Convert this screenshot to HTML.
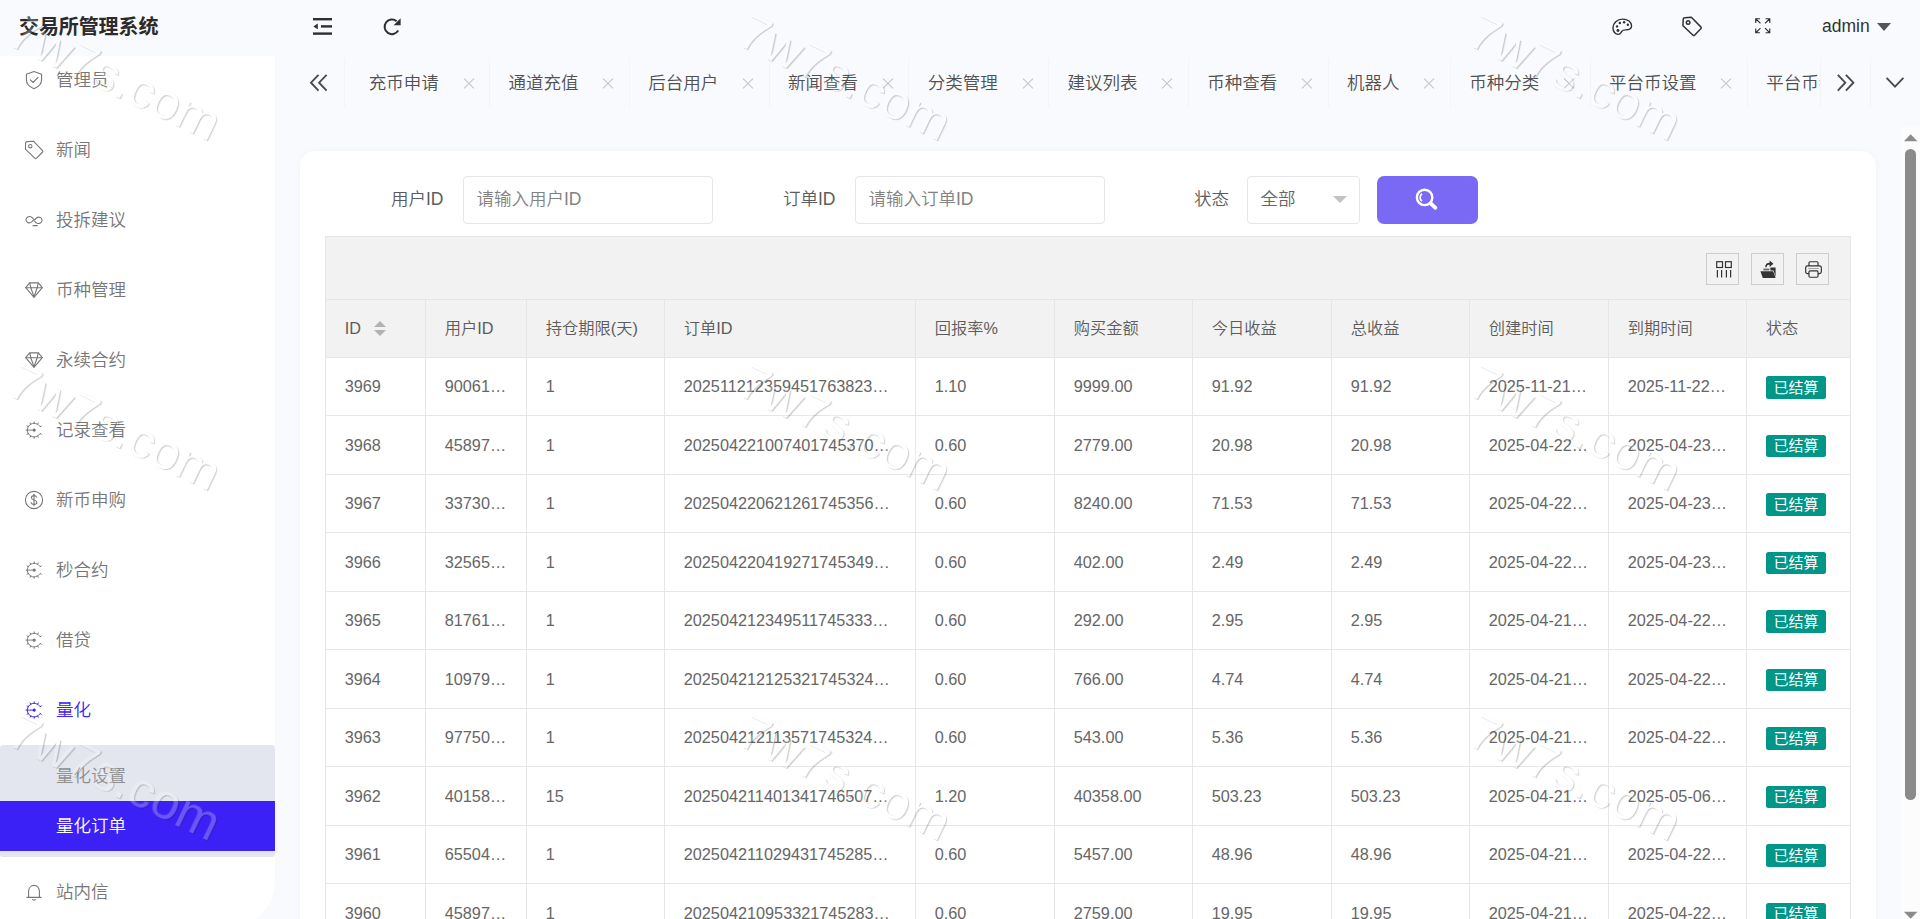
<!DOCTYPE html>
<html lang="zh-CN">
<head>
<meta charset="utf-8">
<title>交易所管理系统</title>
<style>
*{box-sizing:border-box;margin:0;padding:0}
html,body{width:1920px;height:919px;overflow:hidden}
body{background:#f9fafe;font-family:"Liberation Sans","Noto Sans CJK SC",sans-serif;font-size:17.5px;color:#666;position:relative;font-weight:350}
svg{display:block;overflow:visible}
.abs{position:absolute}
/* header */
#logo{position:absolute;left:19px;top:0;height:52px;line-height:54px;font-size:20px;font-weight:700;color:#2b2b2b;white-space:nowrap;letter-spacing:-0.1px}
.hicon{position:absolute;color:#2f2f2f}
#admin{position:absolute;left:1822px;top:12px;height:28px;line-height:28px;font-size:17.5px;color:#333}
#caret{position:absolute;left:1877px;top:22.5px;width:0;height:0;border-left:7px solid transparent;border-right:7px solid transparent;border-top:8px solid #555}
/* sidebar */
#side{position:absolute;left:0;top:56px;width:275px;height:871px;background:#fff;border-bottom-right-radius:45px;overflow:hidden}
.mi{position:absolute;left:0;width:275px;height:70px;line-height:71.5px;color:#777;font-size:17.5px;white-space:nowrap}
.mi svg{position:absolute;left:24px;top:25px;width:20px;height:20px}
.mi span{position:absolute;left:56px;top:0}
.mi.on{color:#3b21f5}
#sub{position:absolute;left:0;top:689px;width:275px;height:112px;background:#e4e6ef;border-radius:3px 3px 3px 3px}
#sub .s1{position:absolute;left:56px;top:6px;height:50px;line-height:51.5px;color:#8e8e8e}
#sub .s2{position:absolute;left:0;top:56px;width:275px;height:50px;line-height:51.5px;background:#3b21f5;color:#fff;padding-left:56px}
/* tabs */
#tabs{position:absolute;left:300px;top:56px;width:1620px;height:52px}
.tsep{position:absolute;top:2px;width:1px;height:49px;background:#f3f3f8}
.tab{position:absolute;top:0;height:52px;line-height:55px;color:#505050;font-size:17.5px;white-space:nowrap;overflow:hidden}
.tx{position:absolute;top:22px;width:10px;height:10px}
.tx:before,.tx:after{content:"";position:absolute;left:-2px;top:4.5px;width:14px;height:1px;background:#c4c4c4;transform:rotate(45deg)}
.tx:after{transform:rotate(-45deg)}
/* card */
#card{position:absolute;left:300px;top:151px;width:1576px;height:800px;background:#fff;border-radius:15px;box-shadow:0 0 6px rgba(120,120,160,.05)}
.lbl{position:absolute;top:176px;height:47.5px;line-height:47.5px;color:#5c5c5c;white-space:nowrap}
.inp{position:absolute;top:176px;height:47.5px;line-height:45.5px;border:1px solid #e6e6e6;border-radius:4px;background:#fff;color:#828282;padding-left:12.5px;white-space:nowrap}
#btn{position:absolute;left:1377px;top:176px;width:101px;height:47.5px;background:#7a69f5;border-radius:7px}
/* table */
#tb{position:absolute;left:325px;top:236px;width:1526px;height:700px;border:1px solid #e6e6e6;border-bottom:0;background:#fff}
#tool{position:absolute;left:0;top:0;width:1524px;height:63px;background:#f2f2f2;border-bottom:1px solid #e6e6e6}
.tbtn{position:absolute;top:16px;width:33px;height:32px;border:1px solid #ccc}
#th{position:absolute;left:0;top:63px;width:1524px;height:58px;line-height:56px;background:#f2f2f2;border-bottom:1px solid #e6e6e6}
.row{position:absolute;left:0;width:1524px;height:58.5px;border-bottom:1px solid #e6e6e6}
.c{position:absolute;top:0;height:100%;line-height:inherit;font-size:16.25px;padding-left:18.75px;white-space:nowrap;color:#666;border-right:1px solid #e6e6e6;overflow:hidden}
.bd{position:absolute;left:19px;top:18.5px;width:60px;height:22.5px;line-height:22.5px;background:#009688;border-radius:2.5px;color:#fff;font-size:15px;text-align:center;font-weight:400}
#th .c{color:#5c5c5c}
/* scrollbar */
#sb{position:absolute;left:1901px;top:126px;width:19px;height:793px;background:#fcfcfc}
#sbt{position:absolute;left:4px;top:22.5px;width:11px;height:651px;border-radius:5.5px;background:#8b8b8b}
</style>
</head>
<body>
<div id="logo">交易所管理系统</div>
<div id="side">
<div class="mi" style="top:-11px"><svg width="20" height="20" viewBox="0 0 20 20" style="" fill="none" stroke="currentColor" stroke-width="1.1" stroke-linecap="round" stroke-linejoin="round"><path d="M10 1.6 L17.6 4.2 V9.6 C17.6 14 14.2 17.2 10 18.8 C5.8 17.2 2.4 14 2.4 9.6 V4.2 Z"/><path d="M6.3 9.8 L9.1 12.5 L14 7.3"/></svg><span>管理员</span></div>
<div class="mi" style="top:59px"><svg width="20" height="20" viewBox="0 0 20 20" style="" fill="none" stroke="currentColor" stroke-width="1.1" stroke-linecap="round" stroke-linejoin="round"><path d="M1.6 3.2 Q1.6 1.6 3.2 1.6 L9.4 1.2 L18.6 10.6 Q19.2 11.3 18.6 12 L12.4 18.3 Q11.7 18.9 11 18.3 L1.4 9.2 Z"/><circle cx="6.3" cy="6.2" r="1.7"/></svg><span>新闻</span></div>
<div class="mi" style="top:129px"><svg width="20" height="20" viewBox="0 0 20 20" style="" fill="none" stroke="currentColor" stroke-width="1.1" stroke-linecap="round" stroke-linejoin="round"><path d="M9.4 9.0 C8.2 6.6 5.6 5.9 3.6 7.0 C1.4 8.3 1.4 11.3 3.6 12.4 C5.4 13.3 7.4 12.6 8.6 11.0"/><path d="M10.6 11.0 C11.8 13.4 14.4 14.1 16.4 13.0 C18.6 11.7 18.6 8.7 16.4 7.6 C14.6 6.7 12.6 7.4 11.4 9.0"/><path d="M8.6 11.0 L11.4 9.0"/><path d="M9 15.6 H13.4"/></svg><span>投拆建议</span></div>
<div class="mi" style="top:199px"><svg width="20" height="20" viewBox="0 0 20 20" style="" fill="none" stroke="currentColor" stroke-width="1.1" stroke-linecap="round" stroke-linejoin="round"><path d="M5.6 2.9 H14.4 L18.3 7.7 L10 17.4 L1.7 7.7 Z"/><path d="M1.9 7.7 H18.1"/><path d="M6.8 7.7 L10 16.8 L13.2 7.7"/><path d="M5.8 3.1 L6.8 7.7 M14.2 3.1 L13.2 7.7"/></svg><span>币种管理</span></div>
<div class="mi" style="top:269px"><svg width="20" height="20" viewBox="0 0 20 20" style="" fill="none" stroke="currentColor" stroke-width="1.1" stroke-linecap="round" stroke-linejoin="round"><path d="M5.6 2.9 H14.4 L18.3 7.7 L10 17.4 L1.7 7.7 Z"/><path d="M1.9 7.7 H18.1"/><path d="M6.8 7.7 L10 16.8 L13.2 7.7"/><path d="M5.8 3.1 L6.8 7.7 M14.2 3.1 L13.2 7.7"/></svg><span>永续合约</span></div>
<div class="mi" style="top:339px"><svg width="20" height="20" viewBox="0 0 20 20" style="" fill="none" stroke="currentColor" stroke-width="0.95" stroke-linecap="round" stroke-linejoin="round"><path d="M15.99 13.86 A6.9 6.9 0 1 1 15.99 6.34"/><path d="M16.18 13.55 L17.30 14.20" stroke-width="1"/><path d="M13.65 16.08 L14.30 17.20" stroke-width="1"/><path d="M10.20 17.00 L10.20 18.30" stroke-width="1"/><path d="M6.75 16.08 L6.10 17.20" stroke-width="1"/><path d="M4.22 13.55 L3.10 14.20" stroke-width="1"/><path d="M3.30 10.10 L2.00 10.10" stroke-width="1"/><path d="M4.22 6.65 L3.10 6.00" stroke-width="1"/><path d="M6.75 4.12 L6.10 3.00" stroke-width="1"/><path d="M10.20 3.20 L10.20 1.90" stroke-width="1"/><path d="M13.65 4.12 L14.30 3.00" stroke-width="1"/><path d="M16.18 6.65 L17.30 6.00" stroke-width="1"/><path d="M4.4 10.1 H10"/><circle cx="10.2" cy="10.1" r="1.6" fill="currentColor" stroke="none"/></svg><span>记录查看</span></div>
<div class="mi" style="top:409px"><svg width="20" height="20" viewBox="0 0 20 20" style="" fill="none" stroke="currentColor" stroke-width="1.1" stroke-linecap="round" stroke-linejoin="round"><circle cx="10" cy="10" r="8.6"/><path d="M12.6 7.2 C12.2 6 11 5.6 10 5.6 C8.6 5.6 7.4 6.4 7.4 7.7 C7.4 10.6 12.8 9.2 12.8 12.3 C12.8 13.6 11.5 14.4 10 14.4 C8.7 14.4 7.5 13.9 7.1 12.6"/><path d="M10 4.2 V15.8"/></svg><span>新币申购</span></div>
<div class="mi" style="top:479px"><svg width="20" height="20" viewBox="0 0 20 20" style="" fill="none" stroke="currentColor" stroke-width="0.95" stroke-linecap="round" stroke-linejoin="round"><path d="M15.99 13.86 A6.9 6.9 0 1 1 15.99 6.34"/><path d="M16.18 13.55 L17.30 14.20" stroke-width="1"/><path d="M13.65 16.08 L14.30 17.20" stroke-width="1"/><path d="M10.20 17.00 L10.20 18.30" stroke-width="1"/><path d="M6.75 16.08 L6.10 17.20" stroke-width="1"/><path d="M4.22 13.55 L3.10 14.20" stroke-width="1"/><path d="M3.30 10.10 L2.00 10.10" stroke-width="1"/><path d="M4.22 6.65 L3.10 6.00" stroke-width="1"/><path d="M6.75 4.12 L6.10 3.00" stroke-width="1"/><path d="M10.20 3.20 L10.20 1.90" stroke-width="1"/><path d="M13.65 4.12 L14.30 3.00" stroke-width="1"/><path d="M16.18 6.65 L17.30 6.00" stroke-width="1"/><path d="M4.4 10.1 H10"/><circle cx="10.2" cy="10.1" r="1.6" fill="currentColor" stroke="none"/></svg><span>秒合约</span></div>
<div class="mi" style="top:549px"><svg width="20" height="20" viewBox="0 0 20 20" style="" fill="none" stroke="currentColor" stroke-width="0.95" stroke-linecap="round" stroke-linejoin="round"><path d="M15.99 13.86 A6.9 6.9 0 1 1 15.99 6.34"/><path d="M16.18 13.55 L17.30 14.20" stroke-width="1"/><path d="M13.65 16.08 L14.30 17.20" stroke-width="1"/><path d="M10.20 17.00 L10.20 18.30" stroke-width="1"/><path d="M6.75 16.08 L6.10 17.20" stroke-width="1"/><path d="M4.22 13.55 L3.10 14.20" stroke-width="1"/><path d="M3.30 10.10 L2.00 10.10" stroke-width="1"/><path d="M4.22 6.65 L3.10 6.00" stroke-width="1"/><path d="M6.75 4.12 L6.10 3.00" stroke-width="1"/><path d="M10.20 3.20 L10.20 1.90" stroke-width="1"/><path d="M13.65 4.12 L14.30 3.00" stroke-width="1"/><path d="M16.18 6.65 L17.30 6.00" stroke-width="1"/><path d="M4.4 10.1 H10"/><circle cx="10.2" cy="10.1" r="1.6" fill="currentColor" stroke="none"/></svg><span>借贷</span></div>
<div class="mi on" style="top:619px"><svg width="20" height="20" viewBox="0 0 20 20" style="" fill="none" stroke="currentColor" stroke-width="0.95" stroke-linecap="round" stroke-linejoin="round"><path d="M15.99 13.86 A6.9 6.9 0 1 1 15.99 6.34"/><path d="M16.18 13.55 L17.30 14.20" stroke-width="1"/><path d="M13.65 16.08 L14.30 17.20" stroke-width="1"/><path d="M10.20 17.00 L10.20 18.30" stroke-width="1"/><path d="M6.75 16.08 L6.10 17.20" stroke-width="1"/><path d="M4.22 13.55 L3.10 14.20" stroke-width="1"/><path d="M3.30 10.10 L2.00 10.10" stroke-width="1"/><path d="M4.22 6.65 L3.10 6.00" stroke-width="1"/><path d="M6.75 4.12 L6.10 3.00" stroke-width="1"/><path d="M10.20 3.20 L10.20 1.90" stroke-width="1"/><path d="M13.65 4.12 L14.30 3.00" stroke-width="1"/><path d="M16.18 6.65 L17.30 6.00" stroke-width="1"/><path d="M4.4 10.1 H10"/><circle cx="10.2" cy="10.1" r="1.6" fill="currentColor" stroke="none"/></svg><span>量化</span></div>
<div id="sub"><div class="s1">量化设置</div><div class="s2">量化订单</div></div>
<div class="mi" style="top:801px"><svg width="20" height="20" viewBox="0 0 20 20" style="" fill="none" stroke="currentColor" stroke-width="1.1" stroke-linecap="round" stroke-linejoin="round"><path d="M3 15.4 H17"/><path d="M4.6 15.2 V9.4 C4.6 5.8 7 3.4 10 3.4 C13 3.4 15.4 5.8 15.4 9.4 V15.2"/><path d="M8.6 17.6 Q10 18.6 11.4 17.6"/></svg><span>站内信</span></div>
</div>
<div id="tabs"><svg class="abs" style="left:10px;top:18px" width="18" height="18" viewBox="0 0 18 18" fill="none" stroke="#4a4a4a" stroke-width="1.9"><path d="M8.5 0.8 L1 8.7 L8.5 16.6"/><path d="M16.6 0.8 L9.1 8.7 L16.6 16.6"/></svg><div class="tsep" style="left:43.5px"></div><div class="tab" style="left:68.75px;width:110.00px">充币申请</div><div class="tx" style="left:163.50px"></div><div class="tsep" style="left:189.00px"></div><div class="tab" style="left:208.50px;width:110.00px">通道充值</div><div class="tx" style="left:303.25px"></div><div class="tsep" style="left:328.75px"></div><div class="tab" style="left:348.25px;width:110.00px">后台用户</div><div class="tx" style="left:443.00px"></div><div class="tsep" style="left:468.50px"></div><div class="tab" style="left:488.00px;width:110.00px">新闻查看</div><div class="tx" style="left:582.75px"></div><div class="tsep" style="left:608.25px"></div><div class="tab" style="left:627.75px;width:110.00px">分类管理</div><div class="tx" style="left:722.50px"></div><div class="tsep" style="left:748.00px"></div><div class="tab" style="left:767.50px;width:110.00px">建议列表</div><div class="tx" style="left:862.25px"></div><div class="tsep" style="left:887.75px"></div><div class="tab" style="left:907.25px;width:110.00px">币种查看</div><div class="tx" style="left:1002.00px"></div><div class="tsep" style="left:1027.50px"></div><div class="tab" style="left:1047.00px;width:92.50px">机器人</div><div class="tx" style="left:1124.25px"></div><div class="tsep" style="left:1149.75px"></div><div class="tab" style="left:1169.25px;width:110.00px">币种分类</div><div class="tx" style="left:1264.00px"></div><div class="tsep" style="left:1289.50px"></div><div class="tab" style="left:1309.00px;width:127.50px">平台币设置</div><div class="tx" style="left:1421.25px"></div><div class="tsep" style="left:1446.75px"></div><div class="tab" style="left:1466.25px;width:54.25px">平台币参数</div><div class="abs" style="left:1520.5px;top:0;width:100px;height:52px;background:#f9fafe"></div><div class="tsep" style="left:1520px"></div><div class="tsep" style="left:1570px"></div><svg class="abs" style="left:1537px;top:18px" width="18" height="18" viewBox="0 0 18 18" fill="none" stroke="#4a4a4a" stroke-width="1.9"><path d="M0.8 0.8 L8.3 8.7 L0.8 16.6"/><path d="M8.9 0.8 L16.4 8.7 L8.9 16.6"/></svg><svg class="abs" style="left:1586px;top:21px" width="18" height="11" viewBox="0 0 18 11" fill="none" stroke="#4a4a4a" stroke-width="1.9"><path d="M0.6 0.8 L9 9.6 L17.4 0.8"/></svg></div>
<svg class="hicon" style="left:313px;top:18px" width="19" height="17" viewBox="0 0 19 17" fill="#2f2f2f"><rect x="0" y="0" width="19" height="2.4"/><rect x="8" y="7.2" width="11" height="2.4"/><rect x="0" y="14.4" width="19" height="2.4"/><path d="M0.3 8.4 L4.8 5.6 V11.2 Z"/></svg><svg class="hicon" style="left:383px;top:17px" width="19" height="19" viewBox="0 0 19 19" fill="none" stroke="#2f2f2f" stroke-width="2"><path d="M15.2 13.6 A7.3 7.3 0 1 1 13.6 4.2"/><path d="M17.6 1.2 V8.2 H10.6 Z" fill="#2f2f2f" stroke="none"/></svg><svg class="hicon" style="left:1612px;top:17.5px" width="20.5" height="17.7" viewBox="0 0 22 19" fill="none" stroke="#2f2f2f" stroke-width="1.5"><path d="M11.4 1.2 C5.6 1.2 1 5.6 1 10.6 C1 14.6 3.6 17.6 6.6 17.6 C9 17.6 9.4 15.8 10.4 14.4 C11.4 13 13 12.8 15 12.8 C18.6 12.8 21 11 21 8.4 C21 4.2 16.8 1.2 11.4 1.2 Z"/><circle cx="5.4" cy="9" r="1.3" fill="#2f2f2f" stroke="none"/><circle cx="8.4" cy="5.4" r="1.3" fill="#2f2f2f" stroke="none"/><circle cx="13" cy="4.6" r="1.3" fill="#2f2f2f" stroke="none"/><circle cx="17" cy="7.2" r="1.3" fill="#2f2f2f" stroke="none"/><circle cx="6.4" cy="13.4" r="1.6" fill="#2f2f2f" stroke="none"/></svg><svg class="hicon" style="left:1681px;top:16px" width="22" height="21" viewBox="0 0 20 20" fill="none" stroke="#2f2f2f" stroke-width="1.4" stroke-linejoin="round"><path d="M1.6 3.2 Q1.6 1.6 3.2 1.6 L9.4 1.2 L18.6 10.6 Q19.2 11.3 18.6 12 L12.4 18.3 Q11.7 18.9 11 18.3 L1.4 9.2 Z"/><circle cx="6.3" cy="6.2" r="1.7"/></svg><svg class="hicon" style="left:1754.5px;top:18px" width="15.5" height="15.5" viewBox="0 0 17 17" fill="none" stroke="#2f2f2f" stroke-width="1.25"><path d="M0.8 5.4 V0.8 H5.4 M0.8 0.8 L6 6"/><path d="M11.6 0.8 H16.2 V5.4 M16.2 0.8 L11 6"/><path d="M0.8 11.6 V16.2 H5.4 M0.8 16.2 L6 11"/><path d="M11.6 16.2 H16.2 V11.6 M16.2 16.2 L11 11"/></svg><div id="admin">admin</div><div id="caret"></div>
<div id="card"></div>
<div class="lbl" style="left:391px">用户ID</div><div class="inp" style="left:463px;width:250px">请输入用户ID</div><div class="lbl" style="left:783px">订单ID</div><div class="inp" style="left:855px;width:250px">请输入订单ID</div><div class="lbl" style="left:1194px">状态</div><div class="inp" style="left:1247px;width:112.5px;color:#666">全部</div><div class="abs" style="left:1333px;top:196px;width:0;height:0;border-left:7px solid transparent;border-right:7px solid transparent;border-top:7.5px solid #c2c2c2"></div><div id="btn"><svg class="abs" style="left:37px;top:11px" width="24" height="24" viewBox="0 0 24 24" fill="none" stroke="#fff" stroke-width="2.4" stroke-linecap="round"><circle cx="10.6" cy="10.4" r="7.7"/><path d="M16.9 16.6 L21.4 20.8" stroke-width="3.8"/><path d="M8.02 14.09 A4.5 4.5 0 0 1 8.02 6.71" stroke-width="1.7" stroke-linecap="butt"/></svg></div>
<div id="tb"><div id="tool"><div class="tbtn" style="left:1380px"><svg class="abs" style="left:9px;top:7px" width="16" height="17" viewBox="0 0 16 17" fill="none" stroke="#333" stroke-width="1.2"><rect x="0.7" y="0.7" width="5.8" height="5.8"/><rect x="9.5" y="0.7" width="5.8" height="5.8"/><path d="M1.4 9 V16.4 M5.6 9 V16.4 M10.4 9 V16.4 M14.6 9 V16.4"/></svg></div><div class="tbtn" style="left:1425px"><svg class="abs" style="left:8px;top:6px" width="17" height="19" viewBox="0 0 17 19" fill="#333" stroke="none"><path d="M0.4 11.2 H13.2 L15.6 18 H2.8 Z"/><path d="M10.4 7.4 H15.6 V17 L13.6 10.4 H10.4 Z"/><path d="M3.4 10.4 V8.6 H9.4 V10.4 Z" fill="#666"/><path d="M5.2 7.2 C5.2 4.2 7 2.8 9.6 2.8 V0.6 L13.4 3.8 L9.6 7 V4.8 C8 4.8 6.6 5.4 6.6 7.2 Z"/></svg></div><div class="tbtn" style="left:1470px"><svg class="abs" style="left:7.5px;top:7px" width="17" height="17" viewBox="0 0 18 18" fill="none" stroke="#333" stroke-width="1.25"><path d="M4.2 5.2 V2 Q4.2 0.8 5.4 0.8 H12.6 Q13.8 0.8 13.8 2 V5.2"/><rect x="0.7" y="5.2" width="16.6" height="8.2" rx="2"/><rect x="4.2" y="10.4" width="9.6" height="6.8" rx="1.2" fill="#f2f2f2"/><path d="M3.4 8 H14.6" stroke-width="0.8" stroke="#888"/></svg></div></div><div id="th"><div class="c" style="left:0.0px;width:100.0px">ID</div><div class="c" style="left:100.0px;width:101.0px">用户ID</div><div class="c" style="left:201.0px;width:138.0px">持仓期限(天)</div><div class="c" style="left:339.0px;width:251.0px">订单ID</div><div class="c" style="left:590.0px;width:139.0px">回报率%</div><div class="c" style="left:729.0px;width:138.0px">购买金额</div><div class="c" style="left:867.0px;width:139.0px">今日收益</div><div class="c" style="left:1006.0px;width:138.0px">总收益</div><div class="c" style="left:1144.0px;width:139.0px">创建时间</div><div class="c" style="left:1283.0px;width:138.0px">到期时间</div><div class="c" style="left:1421.0px;width:104.0px;border-right:0">状态</div><div class="abs" style="left:48px;top:21px;width:0;height:0;border-left:6px solid transparent;border-right:6px solid transparent;border-bottom:6px solid #b2b2b2"></div><div class="abs" style="left:48px;top:30px;width:0;height:0;border-left:6px solid transparent;border-right:6px solid transparent;border-top:6px solid #b2b2b2"></div></div>
<div class="row" style="top:121px;height:58px;line-height:56px"><div class="c" style="left:0.0px;width:100.0px">3969</div><div class="c" style="left:100.0px;width:101.0px">90061…</div><div class="c" style="left:201.0px;width:138.0px">1</div><div class="c" style="left:339.0px;width:251.0px">202511212359451763823…</div><div class="c" style="left:590.0px;width:139.0px">1.10</div><div class="c" style="left:729.0px;width:138.0px">9999.00</div><div class="c" style="left:867.0px;width:139.0px">91.92</div><div class="c" style="left:1006.0px;width:138.0px">91.92</div><div class="c" style="left:1144.0px;width:139.0px">2025-11-21…</div><div class="c" style="left:1283.0px;width:138.0px">2025-11-22…</div><div class="c" style="left:1421.0px;width:104.0px;border-right:0"><span class="bd" style="top:18px;height:23px;line-height:23px">已结算</span></div></div>
<div class="row" style="top:179px;height:59px;line-height:59px"><div class="c" style="left:0.0px;width:100.0px">3968</div><div class="c" style="left:100.0px;width:101.0px">45897…</div><div class="c" style="left:201.0px;width:138.0px">1</div><div class="c" style="left:339.0px;width:251.0px">202504221007401745370…</div><div class="c" style="left:590.0px;width:139.0px">0.60</div><div class="c" style="left:729.0px;width:138.0px">2779.00</div><div class="c" style="left:867.0px;width:139.0px">20.98</div><div class="c" style="left:1006.0px;width:138.0px">20.98</div><div class="c" style="left:1144.0px;width:139.0px">2025-04-22…</div><div class="c" style="left:1283.0px;width:138.0px">2025-04-23…</div><div class="c" style="left:1421.0px;width:104.0px;border-right:0"><span class="bd" style="top:19px;height:22px;line-height:22px">已结算</span></div></div>
<div class="row" style="top:238px;height:58px;line-height:56px"><div class="c" style="left:0.0px;width:100.0px">3967</div><div class="c" style="left:100.0px;width:101.0px">33730…</div><div class="c" style="left:201.0px;width:138.0px">1</div><div class="c" style="left:339.0px;width:251.0px">202504220621261745356…</div><div class="c" style="left:590.0px;width:139.0px">0.60</div><div class="c" style="left:729.0px;width:138.0px">8240.00</div><div class="c" style="left:867.0px;width:139.0px">71.53</div><div class="c" style="left:1006.0px;width:138.0px">71.53</div><div class="c" style="left:1144.0px;width:139.0px">2025-04-22…</div><div class="c" style="left:1283.0px;width:138.0px">2025-04-23…</div><div class="c" style="left:1421.0px;width:104.0px;border-right:0"><span class="bd" style="top:18px;height:23px;line-height:23px">已结算</span></div></div>
<div class="row" style="top:296px;height:59px;line-height:59px"><div class="c" style="left:0.0px;width:100.0px">3966</div><div class="c" style="left:100.0px;width:101.0px">32565…</div><div class="c" style="left:201.0px;width:138.0px">1</div><div class="c" style="left:339.0px;width:251.0px">202504220419271745349…</div><div class="c" style="left:590.0px;width:139.0px">0.60</div><div class="c" style="left:729.0px;width:138.0px">402.00</div><div class="c" style="left:867.0px;width:139.0px">2.49</div><div class="c" style="left:1006.0px;width:138.0px">2.49</div><div class="c" style="left:1144.0px;width:139.0px">2025-04-22…</div><div class="c" style="left:1283.0px;width:138.0px">2025-04-23…</div><div class="c" style="left:1421.0px;width:104.0px;border-right:0"><span class="bd" style="top:19px;height:22px;line-height:22px">已结算</span></div></div>
<div class="row" style="top:355px;height:58px;line-height:56px"><div class="c" style="left:0.0px;width:100.0px">3965</div><div class="c" style="left:100.0px;width:101.0px">81761…</div><div class="c" style="left:201.0px;width:138.0px">1</div><div class="c" style="left:339.0px;width:251.0px">202504212349511745333…</div><div class="c" style="left:590.0px;width:139.0px">0.60</div><div class="c" style="left:729.0px;width:138.0px">292.00</div><div class="c" style="left:867.0px;width:139.0px">2.95</div><div class="c" style="left:1006.0px;width:138.0px">2.95</div><div class="c" style="left:1144.0px;width:139.0px">2025-04-21…</div><div class="c" style="left:1283.0px;width:138.0px">2025-04-22…</div><div class="c" style="left:1421.0px;width:104.0px;border-right:0"><span class="bd" style="top:18px;height:23px;line-height:23px">已结算</span></div></div>
<div class="row" style="top:413px;height:59px;line-height:59px"><div class="c" style="left:0.0px;width:100.0px">3964</div><div class="c" style="left:100.0px;width:101.0px">10979…</div><div class="c" style="left:201.0px;width:138.0px">1</div><div class="c" style="left:339.0px;width:251.0px">202504212125321745324…</div><div class="c" style="left:590.0px;width:139.0px">0.60</div><div class="c" style="left:729.0px;width:138.0px">766.00</div><div class="c" style="left:867.0px;width:139.0px">4.74</div><div class="c" style="left:1006.0px;width:138.0px">4.74</div><div class="c" style="left:1144.0px;width:139.0px">2025-04-21…</div><div class="c" style="left:1283.0px;width:138.0px">2025-04-22…</div><div class="c" style="left:1421.0px;width:104.0px;border-right:0"><span class="bd" style="top:19px;height:22px;line-height:22px">已结算</span></div></div>
<div class="row" style="top:472px;height:58px;line-height:56px"><div class="c" style="left:0.0px;width:100.0px">3963</div><div class="c" style="left:100.0px;width:101.0px">97750…</div><div class="c" style="left:201.0px;width:138.0px">1</div><div class="c" style="left:339.0px;width:251.0px">202504212113571745324…</div><div class="c" style="left:590.0px;width:139.0px">0.60</div><div class="c" style="left:729.0px;width:138.0px">543.00</div><div class="c" style="left:867.0px;width:139.0px">5.36</div><div class="c" style="left:1006.0px;width:138.0px">5.36</div><div class="c" style="left:1144.0px;width:139.0px">2025-04-21…</div><div class="c" style="left:1283.0px;width:138.0px">2025-04-22…</div><div class="c" style="left:1421.0px;width:104.0px;border-right:0"><span class="bd" style="top:18px;height:23px;line-height:23px">已结算</span></div></div>
<div class="row" style="top:530px;height:59px;line-height:59px"><div class="c" style="left:0.0px;width:100.0px">3962</div><div class="c" style="left:100.0px;width:101.0px">40158…</div><div class="c" style="left:201.0px;width:138.0px">15</div><div class="c" style="left:339.0px;width:251.0px">202504211401341746507…</div><div class="c" style="left:590.0px;width:139.0px">1.20</div><div class="c" style="left:729.0px;width:138.0px">40358.00</div><div class="c" style="left:867.0px;width:139.0px">503.23</div><div class="c" style="left:1006.0px;width:138.0px">503.23</div><div class="c" style="left:1144.0px;width:139.0px">2025-04-21…</div><div class="c" style="left:1283.0px;width:138.0px">2025-05-06…</div><div class="c" style="left:1421.0px;width:104.0px;border-right:0"><span class="bd" style="top:19px;height:22px;line-height:22px">已结算</span></div></div>
<div class="row" style="top:589px;height:58px;line-height:56px"><div class="c" style="left:0.0px;width:100.0px">3961</div><div class="c" style="left:100.0px;width:101.0px">65504…</div><div class="c" style="left:201.0px;width:138.0px">1</div><div class="c" style="left:339.0px;width:251.0px">202504211029431745285…</div><div class="c" style="left:590.0px;width:139.0px">0.60</div><div class="c" style="left:729.0px;width:138.0px">5457.00</div><div class="c" style="left:867.0px;width:139.0px">48.96</div><div class="c" style="left:1006.0px;width:138.0px">48.96</div><div class="c" style="left:1144.0px;width:139.0px">2025-04-21…</div><div class="c" style="left:1283.0px;width:138.0px">2025-04-22…</div><div class="c" style="left:1421.0px;width:104.0px;border-right:0"><span class="bd" style="top:18px;height:23px;line-height:23px">已结算</span></div></div>
<div class="row" style="top:647px;height:59px;line-height:59px"><div class="c" style="left:0.0px;width:100.0px">3960</div><div class="c" style="left:100.0px;width:101.0px">45897…</div><div class="c" style="left:201.0px;width:138.0px">1</div><div class="c" style="left:339.0px;width:251.0px">202504210953321745283…</div><div class="c" style="left:590.0px;width:139.0px">0.60</div><div class="c" style="left:729.0px;width:138.0px">2759.00</div><div class="c" style="left:867.0px;width:139.0px">19.95</div><div class="c" style="left:1006.0px;width:138.0px">19.95</div><div class="c" style="left:1144.0px;width:139.0px">2025-04-21…</div><div class="c" style="left:1283.0px;width:138.0px">2025-04-22…</div><div class="c" style="left:1421.0px;width:104.0px;border-right:0"><span class="bd" style="top:19px;height:22px;line-height:22px">已结算</span></div></div>
</div>
<div id="sb"><div id="sbt"></div><svg class="abs" style="left:0;top:0" width="19" height="793" viewBox="0 0 19 793"><path d="M2.9 15.2 L9.65 8.2 L16.4 15.2 Z M2.9 785.8 L9.65 792.8 L16.4 785.8 Z" fill="#8b8b8b"/></svg></div>
<svg id="wm" class="abs" style="left:0;top:0;pointer-events:none" width="1920" height="919" viewBox="0 0 1920 919" font-family="Liberation Sans, sans-serif" font-size="50.6"><mask id="wmk" maskUnits="userSpaceOnUse" x="0" y="0" width="1920" height="919"><rect width="1920" height="919" fill="#fff"/><text transform="translate(4.7 43.3) rotate(25.6)" x="0" y="0" fill="#000">7w7s.com</text><text transform="translate(734.7 43.3) rotate(25.6)" x="0" y="0" fill="#000">7w7s.com</text><text transform="translate(1464.7 43.3) rotate(25.6)" x="0" y="0" fill="#000">7w7s.com</text><text transform="translate(4.7 393.3) rotate(25.6)" x="0" y="0" fill="#000">7w7s.com</text><text transform="translate(734.7 393.3) rotate(25.6)" x="0" y="0" fill="#000">7w7s.com</text><text transform="translate(1464.7 393.3) rotate(25.6)" x="0" y="0" fill="#000">7w7s.com</text><text transform="translate(4.7 743.3) rotate(25.6)" x="0" y="0" fill="#000">7w7s.com</text><text transform="translate(734.7 743.3) rotate(25.6)" x="0" y="0" fill="#000">7w7s.com</text><text transform="translate(1464.7 743.3) rotate(25.6)" x="0" y="0" fill="#000">7w7s.com</text></mask><g mask="url(#wmk)"><text transform="translate(5.7 44.3) rotate(25.6)" x="0" y="0" fill="rgba(0,0,0,.2)">7w7s.com</text><text transform="translate(735.7 44.3) rotate(25.6)" x="0" y="0" fill="rgba(0,0,0,.2)">7w7s.com</text><text transform="translate(1465.7 44.3) rotate(25.6)" x="0" y="0" fill="rgba(0,0,0,.2)">7w7s.com</text><text transform="translate(5.7 394.3) rotate(25.6)" x="0" y="0" fill="rgba(0,0,0,.2)">7w7s.com</text><text transform="translate(735.7 394.3) rotate(25.6)" x="0" y="0" fill="rgba(0,0,0,.2)">7w7s.com</text><text transform="translate(1465.7 394.3) rotate(25.6)" x="0" y="0" fill="rgba(0,0,0,.2)">7w7s.com</text><text transform="translate(5.7 744.3) rotate(25.6)" x="0" y="0" fill="rgba(0,0,0,.2)">7w7s.com</text><text transform="translate(735.7 744.3) rotate(25.6)" x="0" y="0" fill="rgba(0,0,0,.2)">7w7s.com</text><text transform="translate(1465.7 744.3) rotate(25.6)" x="0" y="0" fill="rgba(0,0,0,.2)">7w7s.com</text></g><text transform="translate(4.7 43.3) rotate(25.6)" x="0" y="0" fill="rgba(255,255,255,.24)">7w7s.com</text><text transform="translate(734.7 43.3) rotate(25.6)" x="0" y="0" fill="rgba(255,255,255,.24)">7w7s.com</text><text transform="translate(1464.7 43.3) rotate(25.6)" x="0" y="0" fill="rgba(255,255,255,.24)">7w7s.com</text><text transform="translate(4.7 393.3) rotate(25.6)" x="0" y="0" fill="rgba(255,255,255,.24)">7w7s.com</text><text transform="translate(734.7 393.3) rotate(25.6)" x="0" y="0" fill="rgba(255,255,255,.24)">7w7s.com</text><text transform="translate(1464.7 393.3) rotate(25.6)" x="0" y="0" fill="rgba(255,255,255,.24)">7w7s.com</text><text transform="translate(4.7 743.3) rotate(25.6)" x="0" y="0" fill="rgba(255,255,255,.24)">7w7s.com</text><text transform="translate(734.7 743.3) rotate(25.6)" x="0" y="0" fill="rgba(255,255,255,.24)">7w7s.com</text><text transform="translate(1464.7 743.3) rotate(25.6)" x="0" y="0" fill="rgba(255,255,255,.24)">7w7s.com</text></svg>
</body>
</html>
